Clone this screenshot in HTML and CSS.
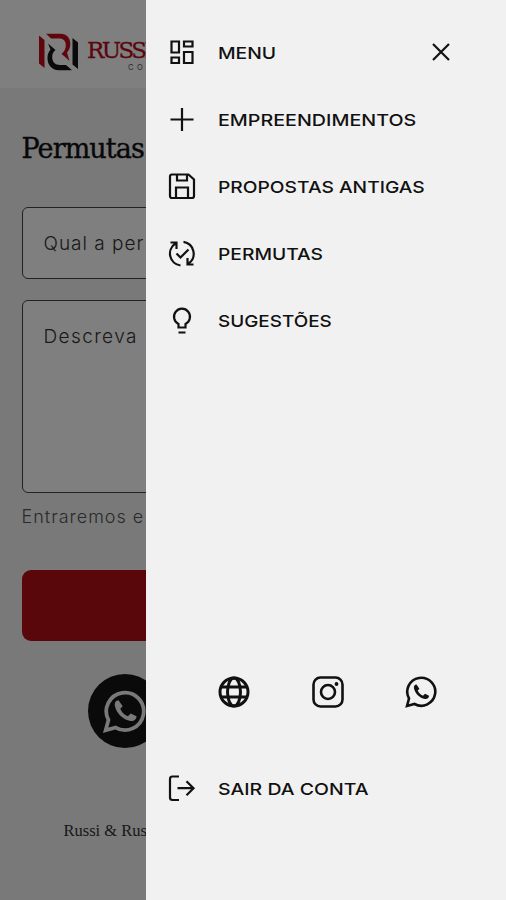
FILE: index.html
```html
<!DOCTYPE html>
<html lang="pt-BR">
<head>
<meta charset="utf-8">
<title>Permutas</title>
<link rel="stylesheet" href="styles.css">
</head>
<body>
<div class="app">
  <header class="topbar">
    <svg class="logo" viewBox="0 0 40 38">
      <path fill="#c10e1c" d="M0 2.500l5.500 4.500v28L0 30.500zM7 .8h14.500C28 .8 31.300 5.500 31.300 11c0 4-1.600 6.500-3.300 8.500l2.500 8.500-5.500-5-2.500-2c3-2.500 4.300-5.500 4.300-9 0-4-2.500-6.500-6.500-6.500H12z"/>
      <path fill="#141414" d="M33.500 5l5.500 4.500V36l-5.500-4.500zM9 10.500l7.500 6.500c-2.300 1.800-3.300 4-3.300 7 0 5 3 8 7.800 8h6l6 5.200H20C12.500 37.200 8.500 31.500 8.500 25c0-3.500.8-6 3-8.500z"/>
    </svg>
    <div class="brand"><span class="brand-name">RUSSI</span><span class="brand-sub">CO</span></div>
  </header>
  <main class="content">
    <h1>Permutas</h1>
    <div class="field">Qual a per</div>
    <div class="field area">Descreva</div>
    <p class="hint">Entraremos e</p>
    <div class="submit"></div>
    <div class="whats">
      <svg viewBox="0 0 32 32" fill="none" stroke="#f3f3f3" stroke-width="2.6"><path d="M2.500 29.500l2-7.200A13 13 0 1 1 9.500 27.500z"/><path class="phone" d="M11.500 8.500c-2 0-3 2-2.500 4 1 5 5.500 9.500 11 10.500 2 .3 4-1 4-3.300l-4-2-2 2c-2.500-1-4.500-3-5.300-5.200l1.700-1.800z"/></svg>
    </div>
    <footer>Russi &amp; Russi</footer>
  </main>
  <div class="scrim"></div>
  <aside class="drawer">
    <nav>
      <div class="row">
        <svg class="icon" viewBox="0 0 28 28"><path d="M3.500 2.500H11v11H3.500zM16 2.500h8.500v5H16zM3.500 18.500H11V24H3.500zM16 13h8.500v11H16z"/></svg>
        <span class="label menu">MENU</span>
        <svg class="close" viewBox="0 0 20 20"><path d="M2 2l16 16M18 2L2 18"/></svg>
      </div>
      <div class="row">
        <svg class="icon" viewBox="0 0 28 28"><path d="M14 2v23M2.500 13.500h23"/></svg>
        <span class="label emp">EMPREENDIMENTOS</span>
      </div>
      <div class="row">
        <svg class="icon" viewBox="0 0 28 28"><path d="M4 1.500h16.500l5.500 5V23q0 2-2 2H4q-2 0-2-2V3.500q0-2 2-2zM8 25V14.500h12V25M9 1.500v6h10v-6"/></svg>
        <span class="label prop">PROPOSTAS ANTIGAS</span>
      </div>
      <div class="row">
        <svg class="icon" viewBox="0 0 28 28"><path d="M12.500 25.500A12 12 0 0 1 7.500 3.500M2.500 2.500H8.500v6.500M15.500 1.800A12 12 0 0 1 20.500 23.500M25.500 24.500H19.500v-6.500M8.500 13.500l4 4 8-8"/></svg>
        <span class="label perm">PERMUTAS</span>
      </div>
      <div class="row">
        <svg class="icon" viewBox="0 0 28 28"><path d="M10.500 20.500v-3.600a8 8 0 1 1 7 0v3.600zM10.500 25.500h7"/></svg>
        <span class="label sug">SUGESTÕES</span>
      </div>
    </nav>
    <div class="social">
      <svg viewBox="0 0 32 32"><circle cx="16" cy="16" r="14"/><ellipse cx="16" cy="16" rx="6.500" ry="14"/><path d="M3 11h26M3 21h26"/></svg>
      <svg viewBox="0 0 32 32"><rect x="1.500" y="1.500" width="29" height="29" rx="7"/><circle cx="16" cy="16" r="7"/><circle class="dot" cx="24.500" cy="8" r="1.900"/></svg>
      <svg viewBox="0 0 32 32"><path d="M2 30l2-7.500A14 14 0 1 1 9.500 28z"/><path class="phone" d="M11.500 8.500c-2 0-3 2-2.500 4 1 5 5.500 9.500 11 10.500 2 .3 4-1 4-3.300l-4-2-2 2c-2.500-1-4.500-3-5.300-5.200l1.700-1.800z"/></svg>
    </div>
    <div class="row exit">
      <svg class="icon" viewBox="0 0 28 28"><path d="M11 1.500H4.500Q2 1.500 2 4v18.500Q2 25 4.500 25H11M9.500 13.200H26M18.500 6.200l7 7-7 7"/></svg>
      <span class="label sair">SAIR DA CONTA</span>
    </div>
  </aside>
</div>
</body>
</html>
```
FILE: styles.css
```css
* { box-sizing: border-box; }
body { margin: 0; font-family: Inter, "Noto Sans", sans-serif; }
.app { position: relative; width: 506px; height: 900px; overflow: hidden; background: #f3f3f3; }
.topbar { height: 88px; padding: 33px 0 0 39px; display: flex; align-items: flex-start; gap: 8px; background: #fff; }
.logo { width: 40px; height: 38px; flex: none; }
.brand { display: flex; flex-direction: column; padding-top: 4px; }
.brand-name { height: 26px; font: 23px/26px "DejaVu Serif", serif; letter-spacing: -2.600px; color: #b40c1c; -webkit-text-stroke: .3px #b40c1c; }
.brand-sub { margin: 0 0 0 41px; font-size: 7.500px; line-height: 9px; letter-spacing: 3.500px; color: #555; }
.content { padding: 0 21.500px; }
h1 { margin: 41px 0 0; height: 77.500px; font: 27px/40px "DejaVu Serif", serif; letter-spacing: -.9px; color: #111; -webkit-text-stroke: .4px #111; }
.field { height: 72px; padding: 22px 21px; border: 1px solid #444; border-radius: 6px; background: #fff; font-size: 19px; line-height: 28px; font-weight: 300; letter-spacing: 1px; color: #333; white-space: nowrap; }
.area { height: 193px; margin-top: 21px; letter-spacing: 1.400px; }
.hint { margin: 10px 0 0; font-size: 18px; line-height: 28px; font-weight: 300; letter-spacing: 1px; color: #555; white-space: nowrap; }
.submit { height: 71px; margin-top: 39px; border-radius: 9px; background: #b20e16; }
.whats { display: flex; align-items: center; justify-content: center; width: 74px; height: 74px; margin: 33.500px 0 0 66.500px; border-radius: 50%; background: #151515; }
.whats svg { width: 46px; height: 46px; }
.whats .phone { fill: #f3f3f3; stroke: none; }
footer { margin: 71px 0 0 42px; font: 16.500px/24px "Liberation Serif", serif; color: #333; }
.scrim { position: absolute; inset: 0; background: rgba(0, 0, 0, .5); }
.drawer { position: absolute; inset: 0 0 0 145.500px; padding: 19px 0 0 22px; background: #f1f1f1; color: #111; }
.row { display: flex; align-items: center; height: 67px; }
.icon { width: 28px; height: 28px; flex: none; }
.drawer svg { fill: none; stroke: #111; stroke-width: 2.200; }
.label { margin-left: 22.500px; font-size: 16.500px; line-height: 24px; font-weight: 500; white-space: nowrap; transform-origin: left center; }
.menu { transform: scaleX(1.170); }
.emp { transform: scaleX(1.193); }
.prop { transform: scaleX(1.165); }
.perm { transform: scaleX(1.165); }
.sug { transform: scaleX(1.145); }
.sair { transform: scaleX(1.180); }
.drawer .close { width: 20px; height: 20px; margin: -2px 0 0 163px; }
.social { display: flex; justify-content: space-between; width: 219px; margin: 322px 0 0 50.500px; }
.social svg { width: 32px; height: 32px; stroke-width: 2.600; }
.social svg:first-child { stroke-width: 3; }
.drawer .phone, .drawer .dot { fill: #111; stroke: none; }
.exit { margin-top: 47px; }
```
